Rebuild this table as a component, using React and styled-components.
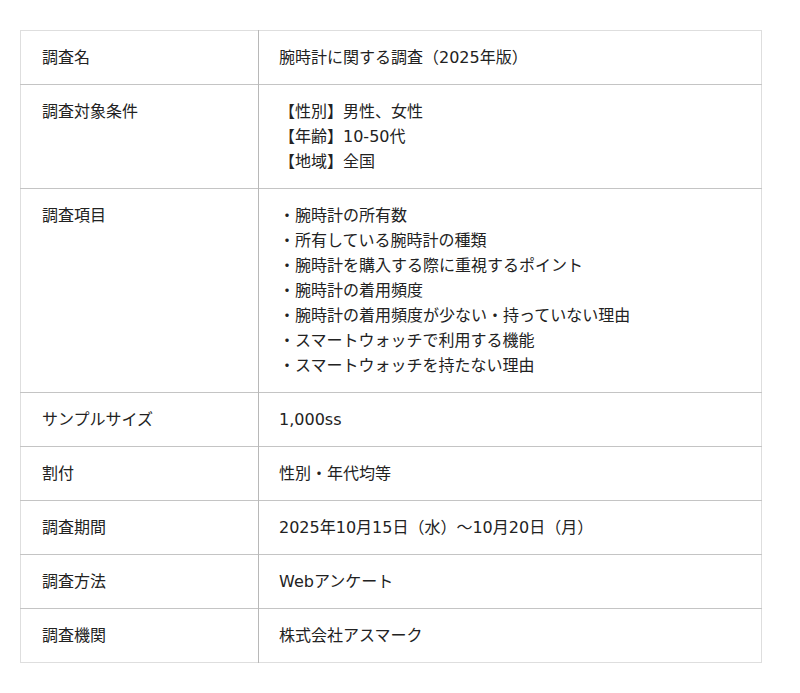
import styled, { createGlobalStyle } from 'styled-components';

const GlobalStyle = createGlobalStyle`
  body {
    margin: 0;
    background: #fff;
    font-family: "DejaVu Sans", "Noto Sans CJK JP", sans-serif;
    color: #222;
    text-spacing-trim: space-all;
  }
`

const Page = styled.div`
  padding: 30px 38px 30px 20px;
`

const Table = styled.table`
  width: 742px;
  border-collapse: collapse;
  border: 1px solid #dedede;
  font-size: 16px;
  line-height: 25px;
`

const Row = styled.tr`
  border-top: 1px solid #c4c4c4;

  &:first-child {
    border-top: 1px solid #dedede;
  }
`

const Label = styled.th`
  width: 195px;
  padding: 14px 21px;
  text-align: left;
  font-weight: normal;
  vertical-align: top;
  border-right: 1px solid #b8b8b8;
`

const Value = styled.td`
  padding: 14px 21px 14px 20px;
  vertical-align: top;
`

const Line = styled.div`
  white-space: nowrap;
`

const rows = [
  ['調査名', ['腕時計に関する調査（2025年版）']],
  ['調査対象条件', ['【性別】男性、女性', '【年齢】10-50代', '【地域】全国']],
  ['調査項目', [
    '・腕時計の所有数',
    '・所有している腕時計の種類',
    '・腕時計を購入する際に重視するポイント',
    '・腕時計の着用頻度',
    '・腕時計の着用頻度が少ない・持っていない理由',
    '・スマートウォッチで利用する機能',
    '・スマートウォッチを持たない理由',
  ]],
  ['サンプルサイズ', ['1,000ss']],
  ['割付', ['性別・年代均等']],
  ['調査期間', ['2025年10月15日（水）～10月20日（月）']],
  ['調査方法', ['Webアンケート']],
  ['調査機関', ['株式会社アスマーク']],
]

const App = () => {
  return (
    <Page>
      <GlobalStyle />
      <Table>
        <tbody>
          {rows.map(([label, lines]) => (
            <Row key={label}>
              <Label>{label}</Label>
              <Value>
                {lines.map(l => <Line key={l}>{l}</Line>)}
              </Value>
            </Row>
          ))}
        </tbody>
      </Table>
    </Page>
  )
}

export default App;
